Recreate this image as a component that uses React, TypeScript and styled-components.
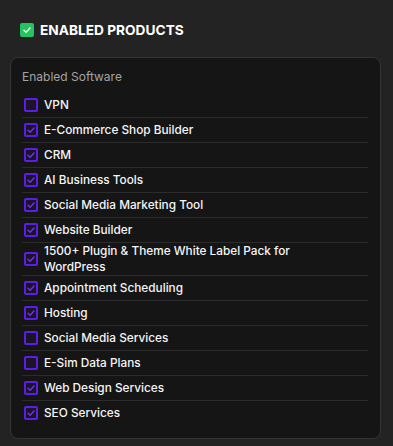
import * as React from "react";
import styled, { createGlobalStyle } from "styled-components";

const GlobalStyle = createGlobalStyle`
  body {
    margin: 0;
    background: #232323;
    font-family: "Inter", "Open Sans", sans-serif;
    color: #ffffff;
  }
`;

interface Product {
  name: string;
  enabled: boolean;
}

const products: Product[] = [
  { name: "VPN", enabled: false },
  { name: "E-Commerce Shop Builder", enabled: true },
  { name: "CRM", enabled: true },
  { name: "AI Business Tools", enabled: true },
  { name: "Social Media Marketing Tool", enabled: true },
  { name: "Website Builder", enabled: true },
  { name: "1500+ Plugin & Theme White Label Pack for WordPress", enabled: true },
  { name: "Appointment Scheduling", enabled: true },
  { name: "Hosting", enabled: true },
  { name: "Social Media Services", enabled: false },
  { name: "E-Sim Data Plans", enabled: false },
  { name: "Web Design Services", enabled: true },
  { name: "SEO Services", enabled: true },
];

const CheckMark = ({ color }: { color: string }) => (
  <svg width="10" height="10" viewBox="0 0 10 10" fill="none">
    <path
      d="M2 5.2 L4.1 7.2 L8 3"
      stroke={color}
      strokeWidth="1.4"
      strokeLinecap="round"
      strokeLinejoin="round"
    />
  </svg>
);

export default function App() {
  return (
    <>
      <GlobalStyle />
      <Page>
        <Header>
          <HeaderBox>
            <CheckMark color="#ffffff" />
          </HeaderBox>
          <Title>ENABLED PRODUCTS</Title>
        </Header>
        <Card>
          <CardLabel>Enabled Software</CardLabel>
          <List>
            {products.map((p) => (
              <Row key={p.name}>
                <Box>{p.enabled ? <CheckMark color="#6d35f0" /> : null}</Box>
                <RowText>{p.name}</RowText>
              </Row>
            ))}
          </List>
        </Card>
      </Page>
    </>
  );
}

const Page = styled.div`
  padding: 21px 12px 8px 10px;
`;

const Header = styled.div`
  display: flex;
  align-items: center;
  gap: 6px;
  padding-left: 10px;
  height: 17px;
`;

const HeaderBox = styled.div`
  width: 14px;
  height: 14px;
  border-radius: 2px;
  background: #22c55e;
  display: flex;
  align-items: center;
  justify-content: center;
`;

const Title = styled.h1`
  margin: 0;
  font-size: 13.7px;
  font-weight: 700;
  color: #ffffff;
`;

const Card = styled.div`
  margin-top: 19px;
  background: #151515;
  border: 1px solid #353535;
  border-radius: 8px;
  padding: 11px 12px 13px 11px;
`;

const CardLabel = styled.div`
  font-size: 12px;
  color: #a3a3a3;
  line-height: 16px;
`;

const List = styled.div`
  margin-top: 8px;
  display: flex;
  flex-direction: column;
`;

const Row = styled.div`
  display: flex;
  align-items: center;
  gap: 6px;
  min-height: 24px;
  padding-left: 2px;
  border-bottom: 1px solid #2c2c2c;
  &:last-child {
    border-bottom: none;
  }
`;

const Box = styled.div`
  flex: none;
  width: 14px;
  height: 14px;
  box-sizing: border-box;
  border: 2px solid #5a1ee6;
  border-radius: 2px;
  background: #1a1426;
  display: flex;
  align-items: center;
  justify-content: center;
`;

const RowText = styled.span`
  max-width: 255px;
  font-size: 11.8px;
  line-height: 16px;
  color: #f5f5f5;
  font-weight: 500;
`;
